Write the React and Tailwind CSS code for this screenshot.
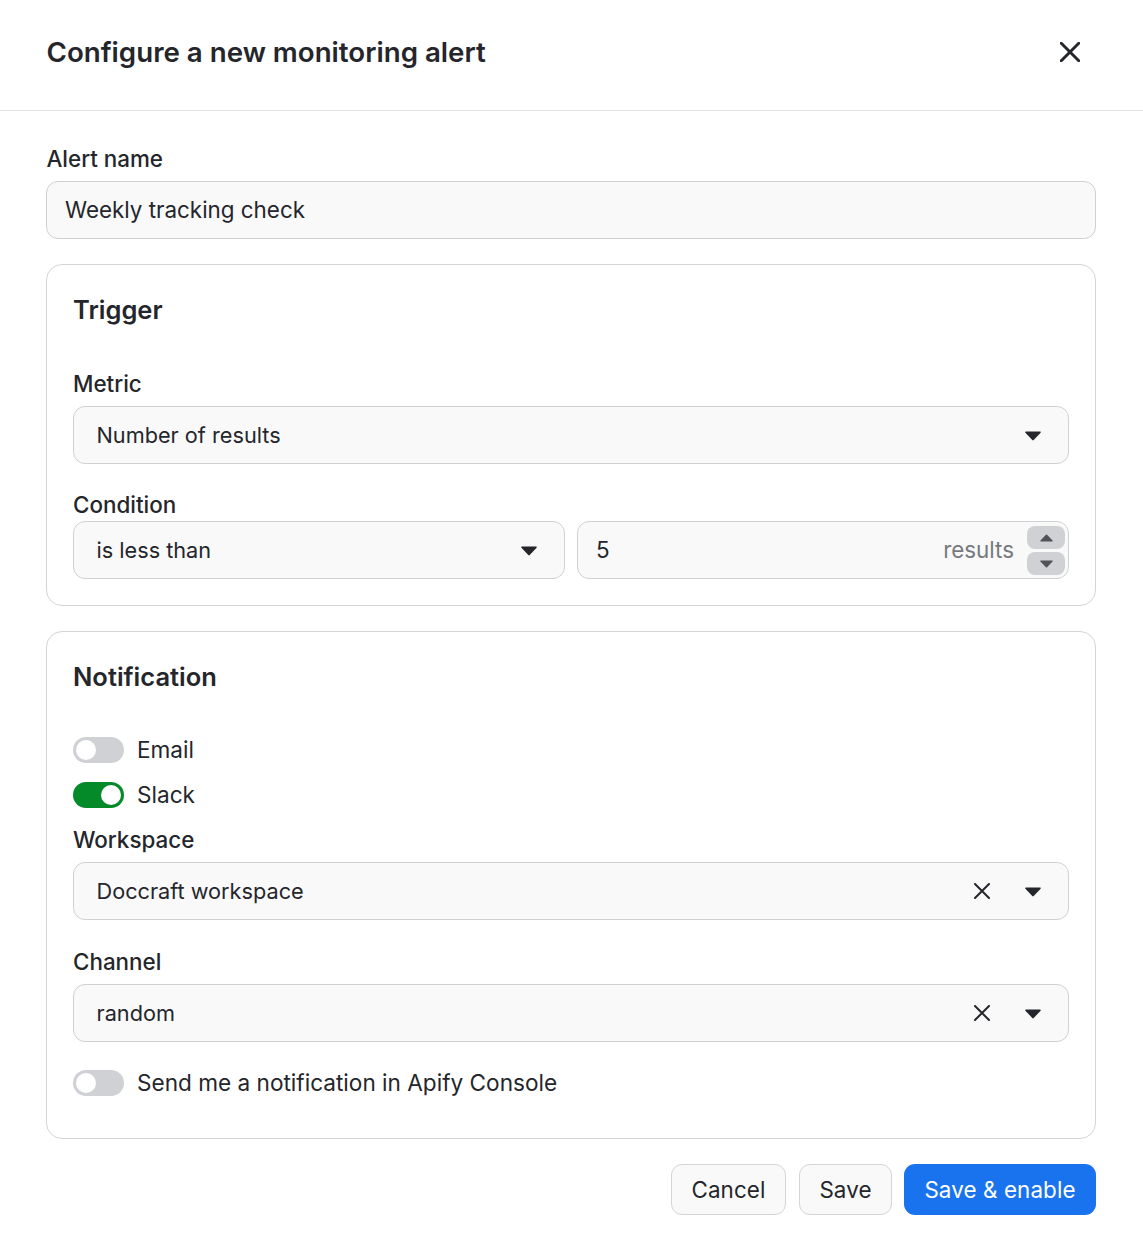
const Caret = ({ className = "" }) => (
  <svg width="16" height="10" viewBox="0 0 16 10" className={`translate-y-[1px] ${className}`}>
    <path d="M1 .6h14c.7 0 1 .7.6 1.2L8.7 9a.9.9 0 0 1-1.4 0L.4 1.8C0 1.300.3.6 1 .6z" fill="currentColor" />
  </svg>
);

const Cross = ({ size = 16, stroke = 2 }) => (
  <svg width={size} height={size} viewBox="0 0 16 16" fill="none">
    <path d="M1 1l14 14M15 1L1 15" stroke="#24262b" strokeWidth={stroke} strokeLinecap="round" />
  </svg>
);

const Label = ({ children, className = "" }) => (
  <div className={`text-[22.4px] leading-[28px] font-medium text-[#24262b] ${className}`}>{children}</div>
);

const Select = ({ value, clear, className = "" }) => (
  <div className={`h-[58px] flex items-center rounded-[12px] border border-[#cfd0d3] bg-[#f9f9f9] pl-[22.5px] pr-[27px] ${className}`}>
    <span className="flex-1 text-[21.7px] text-[#24262b]">{value}</span>
    {clear && (
      <span className="mr-[35px]">
        <Cross size={16} stroke={2} />
      </span>
    )}
    <Caret className="text-[#24262b]" />
  </div>
);

const Toggle = ({ on }) => (
  <div className={`w-[51px] h-[26px] rounded-full flex items-center px-[3px] ${on ? "bg-[#058a2a] justify-end" : "bg-[#d0d1d5] justify-start"}`}>
    <div className="w-[20px] h-[20px] rounded-full bg-white" />
  </div>
);

const ToggleRow = ({ on, children, className = "" }) => (
  <div className={`flex items-center gap-[13px] ${className}`}>
    <Toggle on={on} />
    <span className="text-[22.6px] leading-[28px] text-[#24262b]">{children}</span>
  </div>
);

const Stepper = ({ up }) => (
  <div className="w-[38px] h-[23px] rounded-[8px] bg-[#d0d1d5] flex items-center justify-center">
    <Caret className={`w-[13px] h-[8px] text-[#505359] ${up ? "rotate-180" : ""}`} />
  </div>
);

export default function App() {
  return (
    <div className="w-[1143px] h-[1243px] bg-white font-['Inter',sans-serif] [font-optical-sizing:none] text-[#24262b] flex flex-col">
      <header className="h-[111px] shrink-0 border-b border-[#e4e4e6] flex items-center justify-between pl-[46.500px] pr-[63px]">
        <h1 className="text-[27.7px] font-[560] leading-[36px] text-[#24262b] -mt-[7px]">Configure a new monitoring alert</h1>
        <span className="-mt-[7px]">
          <Cross size={20} stroke={2.4} />
        </span>
      </header>

      <main className="pl-[46px] pr-[47px] pt-[34px] flex flex-col">
        <Label className="pl-[0.500px]">Alert name</Label>
        <div className="mt-[8px] h-[58px] flex items-center rounded-[12px] border border-[#cfd0d3] bg-[#f9f9f9] px-[18px] text-[22.4px]">
          Weekly tracking check
        </div>

        <section className="mt-[25px] h-[342px] rounded-[16px] border border-[#d5d5d8] px-[26px] pt-[27px]">
          <h2 className="text-[25.5px] leading-[36px] font-[580]">Trigger</h2>
          <Label className="mt-[42px]">Metric</Label>
          <Select className="mt-[8px]" value="Number of results" />
          <Label className="mt-[27px]">Condition</Label>
          <div className="mt-[2px] flex gap-[12px]">
            <Select className="w-[492px]" value="is less than" />
            <div className="flex-1 h-[58px] flex items-center rounded-[12px] border border-[#cfd0d3] bg-[#f9f9f9] pl-[18px] pr-[3px]">
              <span className="flex-1 text-[22.4px]">5</span>
              <span className="text-[22.4px] text-[#77797e] mr-[13px]">results</span>
              <div className="flex flex-col gap-[3px]">
                <Stepper up />
                <Stepper />
              </div>
            </div>
          </div>
        </section>

        <section className="mt-[25px] h-[508px] rounded-[16px] border border-[#d5d5d8] px-[26px] pt-[27px]">
          <h2 className="text-[25.5px] leading-[36px] font-[580]">Notification</h2>
          <ToggleRow className="mt-[41px]">Email</ToggleRow>
          <ToggleRow on className="mt-[17px]">Slack</ToggleRow>
          <Label className="mt-[17px]">Workspace</Label>
          <Select className="mt-[8px]" value="Doccraft workspace" clear />
          <Label className="mt-[28px]">Channel</Label>
          <Select className="mt-[8px]" value="random" clear />
          <ToggleRow className="mt-[27px]">Send me a notification in Apify Console</ToggleRow>
        </section>

        <footer className="mt-[25px] flex justify-end">
          <button className="h-[51px] w-[115px] pt-[1px] rounded-[11px] border border-[#d5d5d8] bg-[#f9f9f9] text-[22.4px] tracking-[0.1px]">Cancel</button>
          <button className="ml-[13px] h-[51px] w-[93px] pt-[1px] rounded-[11px] border border-[#d5d5d8] bg-[#f9f9f9] text-[22.4px] tracking-[0.1px]">Save</button>
          <button className="ml-[12px] h-[51px] w-[192px] pt-[1px] rounded-[11px] bg-[#1a73ee] text-white text-[22.4px] tracking-[0.1px]">Save &amp; enable</button>
        </footer>
      </main>
    </div>
  );
}
